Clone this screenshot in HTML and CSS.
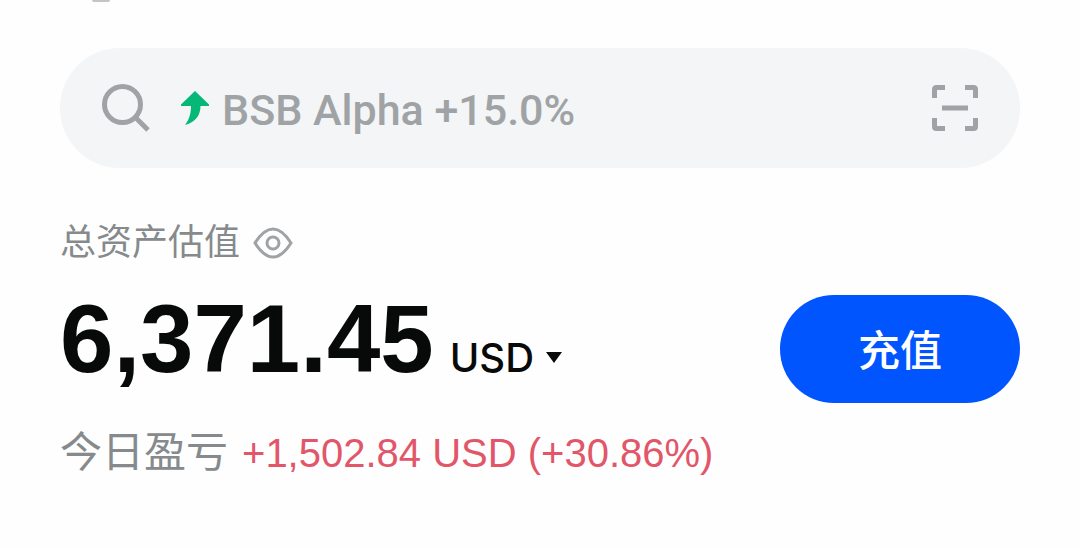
FILE: index.html
```html
<!DOCTYPE html>
<html lang="zh-CN">
<head>
    <meta charset="UTF-8">
    <meta name="viewport" content="width=device-width, initial-scale=1.0">
    <title>总资产估值</title>
    <link rel="stylesheet" href="styles.css">
</head>
<body>
<header class="topbar">
    <span class="topbar-menu"></span>
</header>

<main class="container">
    <form class="search" role="search">
        <svg class="icon-search" viewBox="0 0 48 48" aria-hidden="true">
            <circle cx="20.5" cy="20.5" r="18"/>
            <path d="M33 33L46 46"/>
        </svg>
        <svg class="icon-up" viewBox="0 0 28 34" aria-hidden="true">
            <path d="M14 0L28 13.500V15H19.500C19.500 24 15 31 4 34C8.500 28 10 22 10 15H0V13.500Z"/>
        </svg>
        <input class="search-input" type="text" aria-label="搜索" placeholder="BSB Alpha +15.0%">
        <button class="scan" type="button" aria-label="扫一扫">
            <svg class="icon-scan" viewBox="0 0 46 46" aria-hidden="true">
                <path d="M2.500 13V4.500Q2.500 2.500 4.500 2.500H13M33 2.500H41.500Q43.500 2.500 43.500 4.500V13M43.500 33V41.500Q43.500 43.500 41.500 43.500H33M13 43.500H4.500Q2.500 43.500 2.500 41.500V33"/>
                <path d="M10 23H36"/>
            </svg>
        </button>
    </form>

    <section class="assets">
        <div class="assets-info">
            <div class="assets-label">
                <span>总资产估值</span>
                <button class="eye" type="button" aria-label="隐藏金额">
                    <svg class="icon-eye" viewBox="0 0 40 32" aria-hidden="true">
                        <path d="M2 16C8 6.500 13.500 2 20 2S32 6.500 38 16C32 25.500 26.500 30 20 30S8 25.500 2 16Z"/>
                        <circle cx="20" cy="16" r="6"/>
                    </svg>
                </button>
            </div>
            <div class="balance">
                <span class="balance-value">6,371.45</span>
                <button class="currency" type="button">
                    USD
                    <svg class="icon-caret" viewBox="0 0 16 11" aria-hidden="true">
                        <path d="M0 0H16L8 11Z"/>
                    </svg>
                </button>
            </div>
        </div>
        <button class="deposit" type="button">充值</button>
    </section>

    <p class="profit">
        <span class="profit-label">今日盈亏</span>
        <span class="profit-value">+1,502.84 USD (+30.86%)</span>
    </p>
</main>
</body>
</html>
```

FILE: styles.css
```css
* {
    margin: 0;
    padding: 0;
    box-sizing: border-box;
}

body {
    font-family: "Liberation Sans", "Noto Sans CJK SC", sans-serif;
    background: #fefefe;
    color: #080a0a;
}

button {
    border: none;
    background: none;
    font-family: inherit;
    color: inherit;
    cursor: pointer;
}

svg {
    display: block;
    flex: none;
}

.topbar {
    height: 48px;
    padding: 0 92px;
}

.topbar-menu {
    display: block;
    width: 18px;
    height: 2px;
    margin-left: 0;
    border-radius: 0 0 8px 8px;
    background: #c4c4c4;
}

.container {
    padding: 0 60px;
}

/* search bar */
.search {
    display: flex;
    align-items: center;
    height: 120px;
    padding: 0 42px;
    border-radius: 60px;
    background: #f3f5f7;
}

.icon-search {
    width: 48px;
    height: 48px;
    fill: none;
    stroke: #a0a3a5;
    stroke-width: 5;
}

.icon-up {
    width: 28px;
    height: 34px;
    margin: 0 13px 0 31px;
    fill: #05b878;
}

.search-input {
    flex: 1;
    min-width: 0;
    height: 60px;
    padding-top: 4px;
    border: none;
    outline: none;
    background: transparent;
    font-family: Roboto, sans-serif;
    font-size: 43px;
    font-weight: 500;
    color: #080a0a;
}

.search-input::placeholder {
    color: #a0a3a5;
    opacity: 1;
}

.icon-scan {
    width: 46px;
    height: 46px;
    fill: none;
    stroke: #a0a3a5;
    stroke-width: 5;
}

/* total assets */
.assets {
    display: flex;
    justify-content: space-between;
    align-items: flex-end;
    margin-top: 49px;
}

.assets-info {
    padding-bottom: 4px;
}

.assets-label {
    display: flex;
    align-items: center;
    gap: 13px;
    font-size: 36px;
    line-height: 52px;
    color: #868a8c;
}

.icon-eye {
    width: 40px;
    height: 32px;
    fill: none;
    stroke: #a0a3a5;
    stroke-width: 3;
}

.balance {
    display: flex;
    align-items: baseline;
    gap: 16px;
    margin-top: 10px;
}

.balance-value {
    font-size: 96px;
    font-weight: 700;
    line-height: 120px;
}

.currency {
    display: flex;
    align-items: center;
    gap: 12px;
    font-family: Inter, sans-serif;
    font-size: 40px;
    font-weight: 500;
}

.icon-caret {
    width: 16px;
    height: 11px;
    fill: #080a0a;
}

.deposit {
    width: 240px;
    height: 108px;
    padding-bottom: 4px;
    border-radius: 54px;
    background: #0055ff;
    font-size: 42px;
    font-weight: 500;
    color: #fff;
}

/* today's profit and loss */
.profit {
    display: flex;
    align-items: center;
    gap: 14px;
    margin-top: 22px;
    line-height: 56px;
    white-space: nowrap;
}

.profit-label {
    font-size: 42px;
    color: #868a8c;
}

.profit-value {
    font-size: 40px;
    color: #e2566a;
}
```
